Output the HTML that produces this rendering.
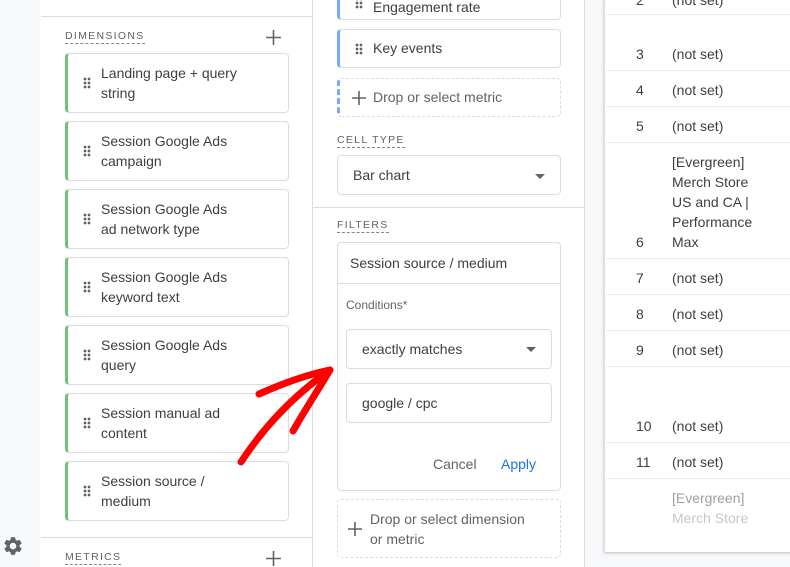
<!DOCTYPE html>
<html><head><style>
*{box-sizing:border-box;margin:0;padding:0}
body{width:790px;height:567px;overflow:hidden;background:#f8f9fa;font-family:"Liberation Sans",Roboto,sans-serif;color:#3c4043;position:relative}
.abs{position:absolute}
.panel{position:absolute;top:0;height:567px;background:#fff;border-right:1px solid #dadce0}
.lbl{position:absolute;font-size:10.5px;letter-spacing:1.3px;color:#5f6368;border-bottom:1px dashed #80868b;padding-bottom:1px}
.card{position:absolute;left:65px;width:224px;height:60px;border:1px solid #dadce0;border-left:3px solid #6fc27a;border-radius:4px;background:#fff}
.card .t{position:absolute;left:33px;top:9px;font-size:14px;line-height:20px;color:#3c4043}
.dots{position:absolute;width:8px;height:12px;background:radial-gradient(circle,#5f6368 1.2px,transparent 1.6px) 0 0/4px 4px}
.card .dots{left:15px;top:23px}
.mc{position:absolute;left:337px;width:224px;border:1px solid #dadce0;border-radius:4px;background:#fff;font-size:14px}
.pl{position:absolute}
.row{position:absolute;left:606px;width:184px;border-top:1px solid #e8eaed}
.n{position:absolute;left:636px;font-size:14px;color:#3c4043}
.v{position:absolute;left:672px;font-size:14px;color:#3c4043;line-height:20px}
.caret{position:absolute;width:0;height:0;border-left:5px solid transparent;border-right:5px solid transparent;border-top:5px solid #5f6368}
</style></head><body>
<div class="panel" style="left:40px;width:273px"></div>
<div class="abs" style="left:41px;top:16px;width:271px;border-top:1px solid #dadce0"></div>
<div class="lbl" style="left:65px;top:30px">DIMENSIONS</div>
<svg class="pl" style="left:266px;top:30px" width="15" height="15"><path d="M7.5 0V15M0 7.5H15" stroke="#5f6368" stroke-width="1.6"/></svg>
<div class="card" style="top:53px"><div class="dots"></div><div class="t">Landing page + query<br>string</div></div>
<div class="card" style="top:121px"><div class="dots"></div><div class="t">Session Google Ads<br>campaign</div></div>
<div class="card" style="top:189px"><div class="dots"></div><div class="t">Session Google Ads<br>ad network type</div></div>
<div class="card" style="top:257px"><div class="dots"></div><div class="t">Session Google Ads<br>keyword text</div></div>
<div class="card" style="top:325px"><div class="dots"></div><div class="t">Session Google Ads<br>query</div></div>
<div class="card" style="top:393px"><div class="dots"></div><div class="t">Session manual ad<br>content</div></div>
<div class="card" style="top:461px"><div class="dots"></div><div class="t">Session source /<br>medium</div></div>
<div class="abs" style="left:41px;top:537px;width:271px;border-top:1px solid #dadce0"></div>
<div class="lbl" style="left:65px;top:551px">METRICS</div>
<svg class="pl" style="left:266px;top:551px" width="15" height="15"><path d="M7.5 0V15M0 7.5H15" stroke="#5f6368" stroke-width="1.6"/></svg>
<svg class="abs" style="left:2px;top:535px" width="22" height="22" viewBox="0 0 24 24"><path fill="#5f6368" d="M19.14 12.94c.04-.3.06-.61.06-.94 0-.32-.02-.64-.07-.94l2.03-1.58a.49.49 0 0 0 .12-.61l-1.920-3.32a.49.49 0 0 0-.59-.22l-2.39.96c-.5-.38-1.030-.7-1.62-.94l-.36-2.54a.48.48 0 0 0-.48-.41h-3.84c-.24 0-.43.17-.47.41l-.36 2.54c-.59.24-1.13.57-1.62.94l-2.39-.96a.48.48 0 0 0-.59.22L2.74 8.87c-.12.21-.08.47.12.61l2.03 1.58c-.05.3-.09.63-.09.94s.02.64.07.94l-2.03 1.58a.49.49 0 0 0-.12.61l1.92 3.32c.12.22.37.29.59.22l2.39-.96c.5.38 1.03.7 1.62.94l.36 2.54c.05.24.24.41.48.41h3.84c.24 0 .44-.17.47-.41l.36-2.54c.59-.24 1.13-.56 1.62-.94l2.39.96c.22.08.47 0 .59-.22l1.92-3.32c.12-.22.07-.47-.12-.61l-2.01-1.58zM12 15.6c-1.98 0-3.6-1.62-3.6-3.600s1.62-3.6 3.6-3.6 3.6 1.62 3.6 3.6-1.62 3.6-3.6 3.6z"/></svg>

<div class="panel" style="left:313px;width:272px"></div>
<div class="mc" style="top:-20px;height:40px;border-left:3px solid #7baaf7"><div class="dots" style="left:15px;top:16px"></div><div class="abs" style="left:33px;top:18px">Engagement rate</div></div>
<div class="mc" style="top:29px;height:39px;border-left:3px solid #7baaf7"><div class="dots" style="left:15px;top:13px"></div><div class="abs" style="left:33px;top:10px">Key events</div></div>
<div class="mc" style="top:78px;height:39px;border:1px dashed #dadce0;border-left:3px dashed #7baaf7"><svg class="pl" style="left:12px;top:12px" width="14" height="14"><path d="M7 0V14M0 7H14" stroke="#5f6368" stroke-width="1.6"/></svg><div class="abs" style="left:33px;top:10px;color:#5f6368">Drop or select metric</div></div>
<div class="lbl" style="left:337px;top:134px">CELL TYPE</div>
<div class="mc" style="top:155px;height:40px"><div class="abs" style="left:15px;top:11px">Bar chart</div><div class="caret" style="left:197px;top:18px"></div></div>
<div class="abs" style="left:313px;top:207px;width:271px;border-top:1px solid #dadce0"></div>
<div class="lbl" style="left:337px;top:219px">FILTERS</div>
<div class="mc" style="top:242px;height:249px">
 <div class="abs" style="left:12px;top:12px">Session source / medium</div>
 <div class="abs" style="left:0;top:40px;width:222px;border-top:1px solid #dadce0"></div>
 <div class="abs" style="left:8px;top:55px;font-size:12px;color:#5f6368">Conditions*</div>
 <div class="abs" style="left:8px;top:86px;width:206px;height:40px;border:1px solid #dadce0;border-radius:4px"><div class="abs" style="left:15px;top:11px">exactly matches</div><div class="caret" style="left:179px;top:17px"></div></div>
 <div class="abs" style="left:8px;top:140px;width:206px;height:40px;border:1px solid #dadce0;border-radius:4px"><div class="abs" style="left:15px;top:11px">google / cpc</div></div>
 <div class="abs" style="left:95px;top:213px;color:#5f6368">Cancel</div>
 <div class="abs" style="left:163px;top:213px;color:#1a73e8">Apply</div>
</div>
<div class="mc" style="top:499px;height:59px;border:1px dashed #dadce0"><svg class="pl" style="left:10px;top:22px" width="14" height="14"><path d="M7 0V14M0 7H14" stroke="#5f6368" stroke-width="1.6"/></svg><div class="abs" style="left:32px;top:9px;color:#5f6368;line-height:20px">Drop or select dimension<br>or metric</div></div>

<div class="abs" style="left:604px;top:-2px;width:190px;height:554px;background:#fff;border-left:1px solid #dadce0;box-shadow:0 1px 3px rgba(0,0,0,.25)"></div>
<div class="n" style="top:-8px">2</div><div class="v" style="top:-10px">(not set)</div>
<div class="row" style="top:14px"></div>
<div class="n" style="top:46px">3</div><div class="v" style="top:44px">(not set)</div>
<div class="row" style="top:70px"></div>
<div class="n" style="top:82px">4</div><div class="v" style="top:80px">(not set)</div>
<div class="row" style="top:106px"></div>
<div class="n" style="top:118px">5</div><div class="v" style="top:116px">(not set)</div>
<div class="row" style="top:142px"></div>
<div class="n" style="top:234px">6</div><div class="v" style="top:152px">[Evergreen]<br>Merch Store<br>US and CA |<br>Performance<br>Max</div>
<div class="row" style="top:258px"></div>
<div class="n" style="top:270px">7</div><div class="v" style="top:268px">(not set)</div>
<div class="row" style="top:294px"></div>
<div class="n" style="top:306px">8</div><div class="v" style="top:304px">(not set)</div>
<div class="row" style="top:330px"></div>
<div class="n" style="top:342px">9</div><div class="v" style="top:340px">(not set)</div>
<div class="row" style="top:366px"></div>
<div class="n" style="top:418px">10</div><div class="v" style="top:416px">(not set)</div>
<div class="row" style="top:442px"></div>
<div class="n" style="top:454px">11</div><div class="v" style="top:452px">(not set)</div>
<div class="row" style="top:478px"></div>
<div class="v" style="top:488px;color:#9aa0a6;height:44px;overflow:hidden">[Evergreen]<br><span style="color:#c4c7ca">Merch Store</span></div>

<svg class="abs" style="left:0;top:0" width="790" height="567"><g fill="none" stroke="#f00" stroke-width="7" stroke-linecap="round" stroke-linejoin="round"><path d="M241 462 C262 430 290 398 330 370"/><path d="M259 394 C282 384 305 375 330 370 C318 390 305 410 293 431"/></g></svg>
</body></html>
